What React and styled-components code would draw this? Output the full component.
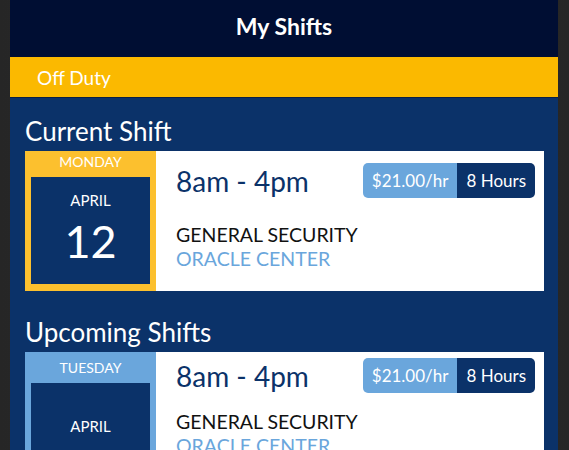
import styled, { createGlobalStyle } from 'styled-components';

const GlobalStyle = createGlobalStyle`
  html, body {
    margin: 0;
    padding: 0;
    background: #2a2a2a;
    font-family: Lato, "Open Sans", sans-serif;
    overflow: hidden;
  }
`;

const Screen = styled.div`
  display: flex;
  justify-content: center;
  height: 450px;
  padding: 0 11px 0 10px;
  background: linear-gradient(to right, #262626, #2e2e2e 50%, #262626);
`;

const Phone = styled.div`
  flex: 1;
  display: flex;
  flex-direction: column;
  background: #0b3269;
  overflow: hidden;

  & > * {
    flex-shrink: 0;
  }
`;

const Header = styled.div`
  height: 57px;
  box-sizing: border-box;
  padding-bottom: 6px;
  display: flex;
  align-items: center;
  justify-content: center;
  background: #000e33;
  color: #fff;
  font-size: 23px;
  font-weight: 700;
`;

const StatusBar = styled.div`
  height: 40px;
  display: flex;
  align-items: center;
  padding-left: 27px;
  background: #fbb900;
  border-bottom: 1px solid #0a1f45;
  color: #fff;
  font-size: 19px;
`;

const Content = styled.div`
  display: flex;
  flex-direction: column;
  padding: 14px 14px 0 15px;

  & > * {
    flex-shrink: 0;
  }
`;

const SectionTitle = styled.h2`
  margin: 0;
  height: 39px;
  display: flex;
  align-items: center;
  padding-bottom: 2px;
  box-sizing: border-box;
  color: #fff;
  font-size: 26px;
  font-weight: 400;
`;

const Card = styled.div`
  display: flex;
  height: 140px;
  background: #fff;
  margin-bottom: 22px;
`;

const DateCol = styled.div`
  width: 131px;
  display: flex;
  flex-direction: column;
  align-items: center;
  padding: 0 6px 7px;
  box-sizing: border-box;
  background: ${(p) => p.$accent};
`;

const DayName = styled.div`
  flex-shrink: 0;
  height: ${(p) => (p.$compact ? 31 : 26)}px;
  box-sizing: border-box;
  padding-bottom: ${(p) => (p.$compact ? 1 : 6)}px;
  display: flex;
  align-items: center;
  color: #fff;
  font-size: 14px;
  text-transform: uppercase;
`;

const DateBox = styled.div`
  align-self: stretch;
  flex: 1;
  min-height: 0;
  overflow: hidden;
  display: flex;
  flex-direction: column;
  align-items: center;
  background: #0b3269;
  color: #fff;
`;

const Month = styled.div`
  flex-shrink: 0;
  margin-top: ${(p) => (p.$compact ? 34 : 14)}px;
  font-size: 15px;
`;

const DayNum = styled.div`
  flex-shrink: 0;
  margin-top: ${(p) => (p.$compact ? 30 : 10)}px;
  font-size: 45px;
  line-height: 1;
`;

const Details = styled.div`
  flex: 1;
  display: flex;
  flex-direction: column;
  padding: ${(p) => (p.$compact ? 5 : 11)}px 9px 0 20px;
`;

const TopRow = styled.div`
  display: flex;
  justify-content: space-between;
  align-items: center;
  height: 36px;
`;

const Time = styled.div`
  color: #0b3269;
  font-size: 28px;
  margin-top: 1px;
`;

const Badge = styled.div`
  display: flex;
  height: 35px;
  border-radius: 5px;
  overflow: hidden;
  font-size: 17px;
  color: #fff;
`;

const BadgePart = styled.div`
  display: flex;
  align-items: center;
  padding: 0 9px;
  background: ${(p) => (p.$dark ? '#0b3269' : '#6aa6dc')};
`;

const Role = styled.div`
  margin-top: ${(p) => (p.$compact ? 17 : 25)}px;
  color: #111;
  font-size: 19.5px;
  line-height: 24px;
`;

const Place = styled.div`
  color: #6aa6dc;
  font-size: 19.5px;
  line-height: 24px;
`;

function ShiftCard({ accent, day, month, date, compact }) {
  return (
    <Card>
      <DateCol $accent={accent}>
        <DayName $compact={compact}>{day}</DayName>
        <DateBox>
          <Month $compact={compact}>{month}</Month>
          <DayNum $compact={compact}>{date}</DayNum>
        </DateBox>
      </DateCol>
      <Details $compact={compact}>
        <TopRow>
          <Time>8am - 4pm</Time>
          <Badge>
            <BadgePart>$21.00/hr</BadgePart>
            <BadgePart $dark>8 Hours</BadgePart>
          </Badge>
        </TopRow>
        <Role $compact={compact}>GENERAL SECURITY</Role>
        <Place>ORACLE CENTER</Place>
      </Details>
    </Card>
  );
}

export default function App() {
  return (
    <>
      <GlobalStyle />
      <Screen>
        <Phone>
          <Header>My Shifts</Header>
          <StatusBar>Off Duty</StatusBar>
          <Content>
            <SectionTitle>Current Shift</SectionTitle>
            <ShiftCard accent="#fcc02e" day="Monday" month="APRIL" date="12" />
            <SectionTitle>Upcoming Shifts</SectionTitle>
            <ShiftCard accent="#6aa6dc" day="Tuesday" month="APRIL" date="13" compact />
          </Content>
        </Phone>
      </Screen>
    </>
  );
}
